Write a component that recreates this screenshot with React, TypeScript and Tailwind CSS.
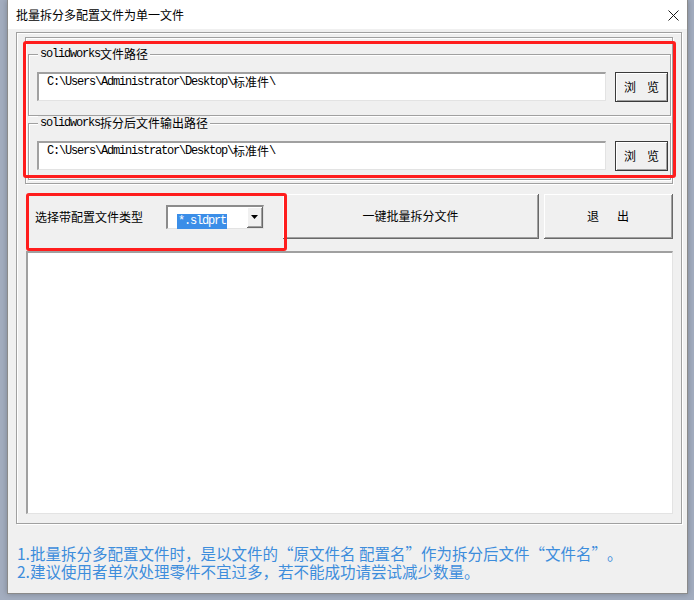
import React from "react";

const CJK = /([\u3000-\u303f\u4e00-\u9fff\uff00-\uffef]+)/;

// SimSun-style mixed run: narrow monospace latin next to full-width CJK
function Sim({ text }: { text: string }) {
  return (
    <>
      {text
        .split(CJK)
        .filter(Boolean)
        .map((part, i) =>
          CJK.test(part) ? (
            <span key={i} className="align-top font-['Noto_Sans_CJK_SC',sans-serif]">
              {part}
            </span>
          ) : (
            <span key={i} className="align-top font-['Liberation_Mono',monospace] tracking-[-1.2px]">
              {part}
            </span>
          )
        )}
    </>
  );
}

// curly quotes get a full-width cell like in the Windows CJK fonts
function Note({ text }: { text: string }) {
  return (
    <p className="h-[18px] whitespace-nowrap">
      {text
        .split(/([“”])/)
        .filter(Boolean)
        .map((part, i) =>
          part === "“" ? (
            <span key={i} className="inline-block h-[18px] w-[1em] align-top text-right">
              {part}
            </span>
          ) : part === "”" ? (
            <span key={i} className="inline-block h-[18px] w-[1em] align-top text-left">
              {part}
            </span>
          ) : (
            <span key={i} className="inline-block h-[18px] align-top">
              {part}
            </span>
          )
        )}
    </p>
  );
}

function PathBox({ value }: { value: string }) {
  return (
    <div className="h-[29px] flex-1 border-t-2 border-l-2 border-t-[#a0a0a0] border-l-[#a0a0a0] border-r border-b border-r-[#e3e3e3] border-b-[#e3e3e3] bg-white pl-[8px] pt-[1px] text-[12px] leading-[14px] text-black">
      <Sim text={value} />
    </div>
  );
}

function BrowseButton() {
  return (
    <button className="flex h-[30px] w-[53px] items-center justify-center gap-[11px] border border-[#3a3a3a] bg-[#f0f0f0] text-[12px] text-black shadow-[inset_1px_1px_0_#ffffff,inset_-1px_-1px_0_#a0a0a0] font-['Noto_Sans_CJK_SC',sans-serif]">
      <span>浏</span>
      <span>览</span>
    </button>
  );
}

function PathGroup({ title, value, bottom }: { title: string; value: string; bottom: string }) {
  return (
    <fieldset
      className={
        "border border-[#a0a0a0] pl-[8px] pr-[2px] pt-[11px] shadow-[inset_1px_1px_0_#ffffff,1px_1px_0_#ffffff] " +
        bottom
      }
    >
      <legend className="ml-[1px] h-[14px] bg-[#f0f0f0] px-[2px] text-[12px] leading-[14px] text-black">
        <Sim text={title} />
      </legend>
      <div className="flex items-start gap-[9px]">
        <PathBox value={value} />
        <BrowseButton />
      </div>
    </fieldset>
  );
}

export default function App() {
  const path = "C:\\Users\\Administrator\\Desktop\\标准件\\";

  return (
    <div className="relative h-[600px] w-[694px] overflow-hidden bg-[#a3adbf] font-['Noto_Sans_CJK_SC',sans-serif]">
      <div className="ml-[7px] flex h-[594px] w-[681px] flex-col border-x border-b border-[#8a8a8a] bg-[#f0f0f0] shadow-[0_0_6px_rgba(0,0,0,0.25)]">
        {/* title bar */}
        <div className="flex h-[29px] items-center justify-between bg-white pl-[8px] pr-[8px]">
          <span className="text-[12px] leading-[14px] text-black">批量拆分多配置文件为单一文件</span>
          <svg width="11" height="11" viewBox="0 0 11 11" className="mt-px">
            <path d="M0.5 0.5 L10.5 10.5 M10.5 0.5 L0.5 10.5" stroke="#1a1a1a" strokeWidth="1" fill="none" />
          </svg>
        </div>

        {/* main frame */}
        <div className="ml-[8px] mt-[3px] w-[666px] border border-[#a0a0a0] pb-[9px] shadow-[inset_1px_1px_0_#ffffff,1px_1px_0_#ffffff]">
          <div className="mx-[8px] mt-[4px] flex flex-col border border-[#a0a0a0] pb-[3px] pl-[2px] pr-px pt-[9px] shadow-[inset_1px_1px_0_#ffffff,1px_1px_0_#ffffff]">
            <PathGroup title="solidworks文件路径" value={path} bottom="pb-[13px]" />
            <PathGroup title="solidworks拆分后文件输出路径" value={path} bottom="pb-[8px]" />
          </div>

          {/* type + actions row */}
          <div className="ml-[9px] mr-[8px] mt-[10px] flex h-[45px] items-center">
            <span className="pl-[9px] text-[12px] leading-[14px] text-black">选择带配置文件类型</span>
            <div className="ml-[23px] flex h-[24px] w-[98px] border-t-2 border-l-2 border-t-[#8c8c8c] border-l-[#8c8c8c] border-r border-b border-r-[#e3e3e3] border-b-[#e3e3e3] bg-white">
              <div className="flex-1 pl-[9px] pt-px">
                <span className="inline-block h-[15px] bg-[#3b8ee8] px-[1px] text-[12px] leading-[15px] text-white">
                  <Sim text="*.sldprt" />
                </span>
              </div>
              <div className="flex w-[16px] items-center justify-center border-r border-b border-[#696969] bg-[#f0f0f0] shadow-[inset_1px_1px_0_#ffffff,inset_-1px_-1px_0_#a0a0a0]">
                <svg width="7" height="4" viewBox="0 0 7 4">
                  <path d="M0 0 H7 L3.5 4 Z" fill="#000" />
                </svg>
              </div>
            </div>
            <button className="ml-[19px] flex h-[45px] w-[256px] items-center justify-center border-r border-b border-[#696969] bg-[#f0f0f0] text-[12px] text-black shadow-[inset_1px_1px_0_#ffffff,inset_-1px_-1px_0_#a0a0a0]">
              一键批量拆分文件
            </button>
            <button className="ml-[5px] flex h-[45px] w-[129px] items-center justify-center gap-[18px] border-r border-b border-[#696969] bg-[#f0f0f0] text-[12px] text-black shadow-[inset_1px_1px_0_#ffffff,inset_-1px_-1px_0_#a0a0a0]">
              <span>退</span>
              <span>出</span>
            </button>
          </div>

          {/* output list */}
          <div className="ml-[9px] mr-[8px] mt-[12px] h-[263px] border-t-2 border-l-2 border-t-[#a0a0a0] border-l-[#a0a0a0] border-r border-b border-r-[#e3e3e3] border-b-[#e3e3e3] bg-white" />
        </div>

        {/* notes */}
        <div className="mt-[20px] pl-[9px] text-[15.5px] leading-[18px] text-[#3d8ddc]">
          <Note text="1.批量拆分多配置文件时，是以文件的“原文件名 配置名”作为拆分后文件“文件名”。" />
          <Note text="2.建议使用者单次处理零件不宜过多，若不能成功请尝试减少数量。" />
        </div>
      </div>

      {/* red highlight marks */}
      <div className="absolute left-[23px] top-[41px] h-[137px] w-[653px] rounded-[3px] border-[3px] border-[#ff1d1d]" />
      <div className="absolute left-[26px] top-[193px] h-[58px] w-[261px] rounded-[3px] border-[3px] border-[#ff1d1d]" />
    </div>
  );
}
